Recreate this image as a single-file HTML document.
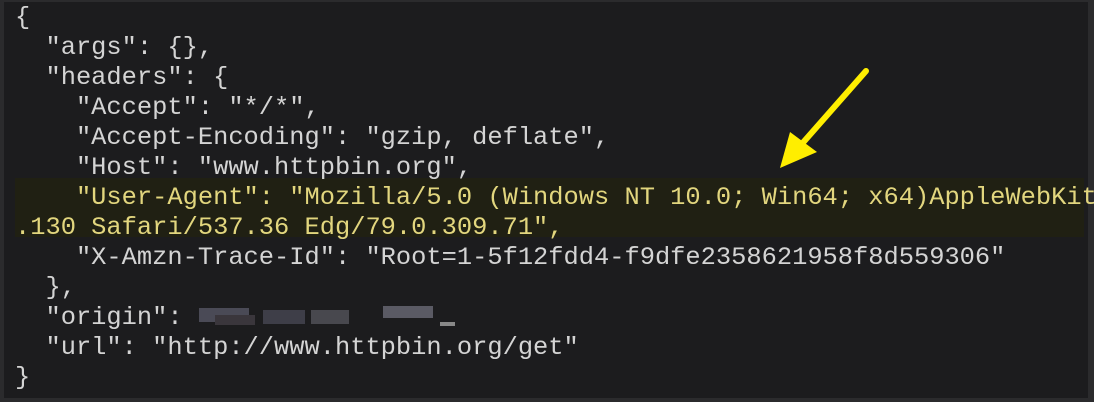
<!DOCTYPE html>
<html><head><style>
html,body{margin:0;padding:0;width:1094px;height:402px;overflow:hidden;background:#2b2b2d;}
#box{position:absolute;left:4px;top:2px;right:6px;bottom:4px;background:#1c1c1e;}
#hl{position:absolute;left:15px;top:178px;width:1069px;height:59px;background:#202013;}
pre{position:absolute;left:15px;top:3px;margin:0;font-family:"Liberation Mono",monospace;font-size:25.4px;line-height:30px;color:#d4d4d4;white-space:pre;}
.y{color:#e2d67e;}
svg{position:absolute;left:0;top:0;}
.o{position:absolute;}
</style></head><body>
<div id="box"></div>
<div id="hl"></div>
<pre>{
  "args": {},
  "headers": {
    "Accept": "*/*",
    "Accept-Encoding": "gzip, deflate",
    "Host": "www.httpbin.org",
<span class="y">    "User-Agent": "Mozilla/5.0 (Windows NT 10.0; Win64; x64)AppleWebKit</span>
<span class="y">.130 Safari/537.36 Edg/79.0.309.71",</span>
    "X-Amzn-Trace-Id": "Root=1-5f12fdd4-f9dfe2358621958f8d559306"
  },
  "origin":
  "url": "http://www.httpbin.org/get"
}</pre>
<div class="o" style="left:199px;top:308px;width:50px;height:14px;background:#4a4a56"></div>
<div class="o" style="left:215px;top:315px;width:40px;height:10px;background:#3a363c"></div>
<div class="o" style="left:263px;top:310px;width:42px;height:14px;background:#3e3e48"></div>
<div class="o" style="left:311px;top:310px;width:38px;height:14px;background:#48484e"></div>
<div class="o" style="left:383px;top:306px;width:50px;height:12px;background:#5a5a64"></div>
<div class="o" style="left:440px;top:322px;width:15px;height:4px;background:#888"></div>
<svg width="1094" height="402"><line x1="866" y1="71" x2="800" y2="146" stroke="#ffee00" stroke-width="6" stroke-linecap="round"/><polygon points="780,168 790,132 817,152" fill="#ffee00"/></svg>
</body></html>
